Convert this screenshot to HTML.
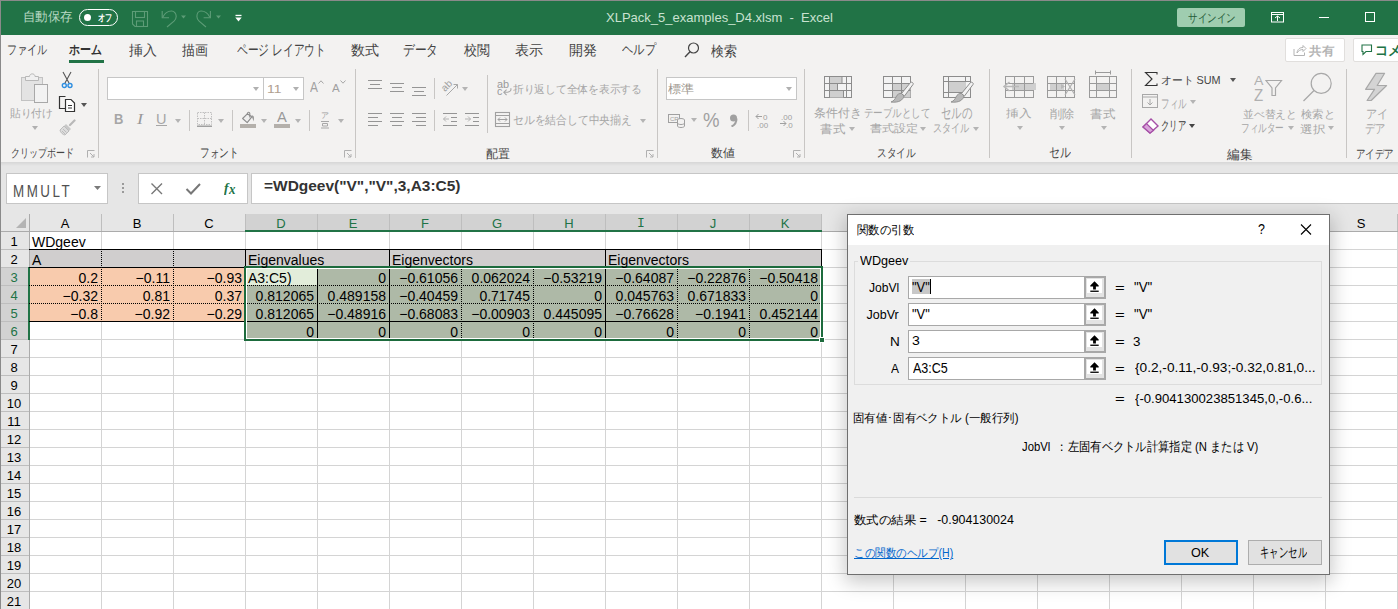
<!DOCTYPE html><html><head><meta charset="utf-8"><style>*{margin:0;padding:0;box-sizing:border-box}
html,body{width:1398px;height:609px;overflow:hidden;background:#fff;font-family:'Liberation Sans',sans-serif}
body{position:relative}
.a{position:absolute;white-space:nowrap;line-height:1}
.t{position:absolute;white-space:nowrap;line-height:1;transform-origin:0 0}
</style></head><body>
<div class="a" style="left:0px;top:0px;width:1398px;height:609px;background:#f3f2f1"></div>
<div class="a" style="left:0px;top:0px;width:1398px;height:35px;background:#217346"></div>
<div class="t" style="left:23.00px;top:10.00px;font-size:13.00px;color:#b7d8c2;font-weight:normal;transform:scaleX(0.959);">自動保存</div>
<div class="a" style="left:79px;top:9px;width:39px;height:17px;border:1.5px solid #fff;border-radius:9px"></div>
<div class="a" style="left:83.5px;top:13.5px;width:7px;height:7px;background:#fff;border-radius:50%"></div>
<div class="t" style="left:98.00px;top:13.00px;font-size:9.50px;color:#fff;font-weight:bold;transform:scaleX(0.722);">オフ</div>
<svg class="a" style="left:131px;top:10px" width="18" height="18" viewBox="0 0 18 18"><path d="M1.5 1.5 H16.5 V16.5 H4 L1.5 14 Z" fill="none" stroke="#5d9c77" stroke-width="1.1"/><rect x="4.5" y="1.5" width="9" height="6" fill="none" stroke="#5d9c77" stroke-width="1.1"/><rect x="5.5" y="11" width="7" height="5.5" fill="none" stroke="#5d9c77" stroke-width="1.1"/></svg>
<svg class="a" style="left:160px;top:9px" width="26" height="20" viewBox="0 0 26 20"><path d="M2.2 2 V8.8 H9" fill="none" stroke="#5d9c77" stroke-width="1.1"/><path d="M2.8 8.2 C5 3.5 8 2 11.5 2 C14.2 2 16.2 4.5 16.2 7.5 C16.2 9.5 15.2 11 14 12.2 L7 18" fill="none" stroke="#5d9c77" stroke-width="1.1"/><path d="M21 6.5 H26 L23.5 9.5 Z" fill="#5d9c77"/></svg>
<svg class="a" style="left:196px;top:9px" width="26" height="20" viewBox="0 0 26 20"><path d="M14.4 2 V8.8 H7.6" fill="none" stroke="#5d9c77" stroke-width="1.1"/><path d="M13.8 8.2 C11.6 3.5 8.6 2 5.1 2 C2.4 2 0.9 4.5 0.9 7.5 C0.9 9.5 1.9 11 3.1 12.2 L10 18" fill="none" stroke="#5d9c77" stroke-width="1.1"/><path d="M20 6.5 H25 L22.5 9.5 Z" fill="#5d9c77"/></svg>
<svg class="a" style="left:235px;top:14px" width="8" height="9" viewBox="0 0 8 9"><rect x="0.5" y="0.8" width="6" height="1.3" fill="#fff"/><path d="M0.3 3.5 H6.7 L3.5 7.5 Z" fill="#fff"/></svg>
<div class="t" style="left:606.00px;top:11.00px;font-size:13.00px;color:#c9e2d1;font-weight:normal;transform:scaleX(1.000);">XLPack_5_examples_D4.xlsm&nbsp;&nbsp;-&nbsp;&nbsp;Excel</div>
<div class="a" style="left:1177px;top:8px;width:68px;height:19px;background:#9fcdb0;border-radius:2px"></div>
<div class="t" style="left:1188.00px;top:13.00px;font-size:11.50px;color:#1f5c38;font-weight:normal;transform:scaleX(0.793);">サインイン</div>
<svg class="a" style="left:1270px;top:11px" width="15" height="12" viewBox="0 0 15 12"><rect x="1.5" y="1.5" width="12" height="9.5" fill="none" stroke="#fff" stroke-width="1"/><line x1="1.5" y1="3.5" x2="13.5" y2="3.5" stroke="#fff"/><path d="M5 7 L7.5 5 L10 7 M7.5 5 V10" stroke="#fff" fill="none"/></svg>
<div class="a" style="left:1319px;top:17px;width:10px;height:1px;background:#fff"></div>
<div class="a" style="left:1365px;top:12px;width:10px;height:10px;border:1px solid #fff"></div>
<div class="t" style="left:7.00px;top:44.00px;font-size:12.50px;color:#444;font-weight:normal;transform:scaleX(0.776);">ファイル</div>
<div class="t" style="left:69.00px;top:43.00px;font-size:13.00px;color:#333;font-weight:bold;transform:scaleX(0.842);">ホーム</div>
<div class="t" style="left:129.00px;top:44.00px;font-size:13.50px;color:#444;font-weight:normal;transform:scaleX(1.001);">挿入</div>
<div class="t" style="left:182.00px;top:44.00px;font-size:13.50px;color:#444;font-weight:normal;transform:scaleX(0.926);">描画</div>
<div class="t" style="left:237.00px;top:42.00px;font-size:15.00px;color:#444;font-weight:normal;transform:scaleX(0.714);">ページ レイアウト</div>
<div class="t" style="left:351.00px;top:44.00px;font-size:13.50px;color:#444;font-weight:normal;transform:scaleX(1.001);">数式</div>
<div class="t" style="left:403.00px;top:43.00px;font-size:14.50px;color:#444;font-weight:normal;transform:scaleX(0.780);">データ</div>
<div class="t" style="left:464.00px;top:44.00px;font-size:13.50px;color:#444;font-weight:normal;transform:scaleX(0.926);">校閲</div>
<div class="t" style="left:515.00px;top:44.00px;font-size:13.50px;color:#444;font-weight:normal;transform:scaleX(1.001);">表示</div>
<div class="t" style="left:569.00px;top:43.00px;font-size:14.00px;color:#444;font-weight:normal;transform:scaleX(1.000);">開発</div>
<div class="t" style="left:622.00px;top:43.00px;font-size:13.50px;color:#444;font-weight:normal;transform:scaleX(0.810);">ヘルプ</div>
<div class="t" style="left:711.00px;top:45.00px;font-size:13.50px;color:#444;font-weight:normal;transform:scaleX(0.926);">検索</div>
<div class="a" style="left:69px;top:60px;width:35px;height:3px;background:#217346"></div>
<svg class="a" style="left:684px;top:42px" width="15" height="16" viewBox="0 0 15 16"><circle cx="9.5" cy="6" r="5" fill="none" stroke="#444" stroke-width="1.2"/><line x1="6" y1="9.8" x2="1" y2="15" stroke="#444" stroke-width="1.4"/></svg>
<div class="a" style="left:1285px;top:38px;width:60px;height:24px;background:#fff;border:1px solid #e1dfdd;border-radius:2px"></div>
<svg class="a" style="left:1292px;top:43px" width="15" height="14" viewBox="0 0 15 14"><path d="M2 6 V12.5 H12.5 V9.5" fill="none" stroke="#b4b4b4"/><path d="M5 10 C5.5 6 8 4.5 11 4.5 V2.5 L14 5.5 L11 8.5 V6.5 C8.5 6.5 6.5 7.5 5 10Z" fill="none" stroke="#b4b4b4"/></svg>
<div class="t" style="left:1309.00px;top:45.00px;font-size:12.00px;color:#b4b4b4;font-weight:bold;transform:scaleX(1.042);">共有</div>
<div class="a" style="left:1353px;top:38px;width:60px;height:24px;background:#fff;border:1px solid #e1dfdd;border-radius:2px"></div>
<svg class="a" style="left:1361px;top:44px" width="14" height="14" viewBox="0 0 14 14"><path d="M1 1 H10.5 V7.5 H5 L2 10.5 V7.5 H1 Z" fill="none" stroke="#217346" stroke-width="1.1"/></svg>
<div class="t" style="left:1375.00px;top:44.00px;font-size:13.50px;color:#217346;font-weight:bold;transform:scaleX(0.941);">コメント</div>
<svg class="a" style="left:19px;top:72px" width="31" height="33" viewBox="0 0 31 33"><rect x="2.5" y="5.5" width="21" height="23" fill="#e3e3e3" stroke="#c2c2c2"/><path d="M6.5 8.5 V4.5 H10.5 C10.5 1 16 1 16 4.5 H19.5 V8.5 Z" fill="#f0f0f0" stroke="#b8b8b8"/><rect x="15.5" y="12.5" width="13" height="18" fill="#f2f2f2" stroke="#a8a8a8"/></svg>
<div class="t" style="left:10.00px;top:108.00px;font-size:11.00px;color:#a6a6a6;font-weight:normal;transform:scaleX(0.976);">貼り付け</div>
<svg class="a" style="left:31.5px;top:126px" width="6" height="4"><path d="M0 0 L6 0 L3.0 4 Z" fill="#b0b0b0"/></svg>
<svg class="a" style="left:61px;top:71px" width="12" height="18" viewBox="0 0 12 18"><path d="M2 1 L8 12 M10 1 L4 12" stroke="#555" stroke-width="1.1" fill="none"/><circle cx="3.3" cy="14.5" r="2" fill="none" stroke="#2e8ee0" stroke-width="1.4"/><circle cx="9" cy="14.5" r="2" fill="none" stroke="#2e8ee0" stroke-width="1.4"/></svg>
<svg class="a" style="left:58px;top:95px" width="18" height="18" viewBox="0 0 18 18"><path d="M7.5 1.5 H1.5 V13.5 H7.5" fill="none" stroke="#333" stroke-width="1.2"/><path d="M7.5 4.5 H13 L16.5 8 V16.5 H7.5 Z" fill="#fff" stroke="#333" stroke-width="1.2"/><path d="M10 10.5 H14 M10 13 H14" stroke="#333"/></svg>
<svg class="a" style="left:80.7px;top:103px" width="6" height="4"><path d="M0 0 L6 0 L3.0 4 Z" fill="#555"/></svg>
<svg class="a" style="left:59px;top:119px" width="17" height="17" viewBox="0 0 17 17"><path d="M11 6 L15.5 1.5" stroke="#b8b8b8" stroke-width="2.2" stroke-linecap="round"/><path d="M7 5 L12 10 L10 12 L5 7 Z" fill="#c8c8c8"/><path d="M5 7 L10 12 L6 16 C4 16 1 13 1 11 Z" fill="#dcdcdc" stroke="#bcbcbc"/><path d="M3 12 L6 15 M4 10 L7.5 13.5" stroke="#bcbcbc"/></svg>
<div class="t" style="left:11.00px;top:148.00px;font-size:11.50px;color:#444;font-weight:normal;transform:scaleX(0.750);">クリップボード</div>
<svg class="a" style="left:87px;top:150px" width="8" height="8" viewBox="0 0 8 8"><path d="M0.5 7.5 V0.5 H7.5" fill="none" stroke="#b0b0b0"/><path d="M3 3 L7 7 M7 4 V7 H4" fill="none" stroke="#b0b0b0"/></svg>
<div class="a" style="left:98px;top:69px;width:1px;height:89px;background:#c8c6c4"></div>
<div class="a" style="left:107px;top:77px;width:157px;height:23px;background:#fff;border:1px solid #c6c6c6"></div>
<svg class="a" style="left:253.0px;top:87px" width="6" height="4"><path d="M0 0 L6 0 L3.0 4 Z" fill="#b0b0b0"/></svg>
<div class="a" style="left:263px;top:77px;width:41px;height:23px;background:#fff;border:1px solid #c6c6c6"></div>
<div class="t" style="left:266.50px;top:84.00px;font-size:11.50px;color:#b0a090;font-weight:normal;transform:scaleX(1.207);">11</div>
<svg class="a" style="left:293.3px;top:87px" width="6" height="4"><path d="M0 0 L6 0 L3.0 4 Z" fill="#b0b0b0"/></svg>
<div class="t" style="left:310.20px;top:80.20px;font-size:14.00px;color:#a0a0a0;font-weight:normal;transform:scaleX(0.850);">A</div>
<svg class="a" style="left:318px;top:80px" width="6" height="4" viewBox="0 0 6 4"><path d="M0.5 3.5 L3 0.8 L5.5 3.5" fill="none" stroke="#a6a6a6"/></svg>
<div class="t" style="left:332.00px;top:82.50px;font-size:11.50px;color:#a0a0a0;font-weight:normal;transform:scaleX(1.004);">A</div>
<svg class="a" style="left:340px;top:80px" width="6" height="4" viewBox="0 0 6 4"><path d="M0.5 0.5 L3 3.2 L5.5 0.5" fill="none" stroke="#a6a6a6"/></svg>
<div class="t" style="left:114.00px;top:112.00px;font-size:14.50px;color:#a6a6a6;font-weight:bold;transform:scaleX(0.893);">B</div>
<div class="t" style="left:137.00px;top:112.00px;font-size:15.00px;color:#999;font-weight:normal;transform:scaleX(1.207);font-style:italic;font-family:'Liberation Serif',serif">I</div>
<div class="t" style="left:156.00px;top:112.00px;font-size:14.50px;color:#a6a6a6;font-weight:normal;transform:scaleX(1.000);">U</div>
<div class="a" style="left:156px;top:125px;width:11px;height:1px;background:#a6a6a6"></div>
<svg class="a" style="left:175.3px;top:119px" width="6" height="4"><path d="M0 0 L6 0 L3.0 4 Z" fill="#b4b4b4"/></svg>
<div class="a" style="left:189px;top:110px;width:1px;height:21px;background:#c8c6c4"></div>
<svg class="a" style="left:196px;top:111px" width="17" height="17" viewBox="0 0 17 17"><rect x="1.5" y="1.5" width="14" height="12" fill="none" stroke="#c0c0c0" stroke-dasharray="1.5 1"/><path d="M8.5 1.5 V13.5 M1.5 7.5 H15.5" stroke="#c0c0c0" stroke-dasharray="1.5 1"/><rect x="1" y="14.5" width="15" height="1.5" fill="#a0a0a0"/></svg>
<svg class="a" style="left:218.2px;top:119px" width="6" height="4"><path d="M0 0 L6 0 L3.0 4 Z" fill="#b4b4b4"/></svg>
<div class="a" style="left:232px;top:110px;width:1px;height:21px;background:#c8c6c4"></div>
<svg class="a" style="left:238px;top:110px" width="20" height="20" viewBox="0 0 20 20"><polygon points="4.6,8.5 9.3,3.8 13.8,6.8 9.2,12.6" fill="#eeeeee" stroke="#8c8c8c" stroke-width="1.1" stroke-linejoin="round"/><path d="M9.3 4 C9.3 2 11.8 1.6 11.8 3.6 V7.6" fill="none" stroke="#8c8c8c" stroke-width="1.1"/><path d="M13.2 6 C15 4.5 17 6.5 15.5 11.5 C15 9.5 14.5 8 13.8 7Z" fill="#9a9a9a"/><rect x="2" y="14" width="16" height="4" fill="#b4b0ab"/></svg>
<svg class="a" style="left:261.2px;top:119px" width="6" height="4"><path d="M0 0 L6 0 L3.0 4 Z" fill="#b4b4b4"/></svg>
<div class="t" style="left:277.40px;top:109.20px;font-size:15.00px;color:#999;font-weight:normal;transform:scaleX(0.982);">A</div>
<div class="a" style="left:274px;top:124px;width:16px;height:4px;background:#b4b0ab"></div>
<svg class="a" style="left:295.1px;top:119px" width="6" height="4"><path d="M0 0 L6 0 L3.0 4 Z" fill="#b4b4b4"/></svg>
<div class="a" style="left:309px;top:110px;width:1px;height:21px;background:#c8c6c4"></div>
<div class="t" style="left:321.00px;top:112.00px;font-size:8.00px;color:#a0a0a0;font-weight:normal;transform:scaleX(1.006);">ア</div>
<svg class="a" style="left:320px;top:120px" width="11" height="9" viewBox="0 0 11 9"><path d="M1 1.5 H9 M2.5 3.5 H7.5 V6 H2.5 Z M1 8 H9" fill="none" stroke="#a8a8a8"/></svg>
<svg class="a" style="left:338.4px;top:119px" width="6" height="4"><path d="M0 0 L6 0 L3.0 4 Z" fill="#b4b4b4"/></svg>
<div class="t" style="left:200.00px;top:146.00px;font-size:13.00px;color:#444;font-weight:normal;transform:scaleX(0.745);">フォント</div>
<svg class="a" style="left:344px;top:150px" width="8" height="8" viewBox="0 0 8 8"><path d="M0.5 7.5 V0.5 H7.5" fill="none" stroke="#b0b0b0"/><path d="M3 3 L7 7 M7 4 V7 H4" fill="none" stroke="#b0b0b0"/></svg>
<div class="a" style="left:355px;top:69px;width:1px;height:89px;background:#c8c6c4"></div>
<div class="a" style="left:368px;top:80px;width:14px;height:1px;background:#959595"></div>
<div class="a" style="left:370px;top:84px;width:10px;height:1px;background:#959595"></div>
<div class="a" style="left:368px;top:88px;width:14px;height:1px;background:#959595"></div>
<div class="a" style="left:390px;top:83px;width:14px;height:1px;background:#959595"></div>
<div class="a" style="left:392px;top:87px;width:10px;height:1px;background:#959595"></div>
<div class="a" style="left:390px;top:91px;width:14px;height:1px;background:#959595"></div>
<div class="a" style="left:412px;top:87px;width:14px;height:1px;background:#959595"></div>
<div class="a" style="left:414px;top:91px;width:10px;height:1px;background:#959595"></div>
<div class="a" style="left:412px;top:95px;width:14px;height:1px;background:#959595"></div>
<div class="a" style="left:434px;top:78px;width:1px;height:21px;background:#c8c6c4"></div>
<svg class="a" style="left:440px;top:78px" width="22" height="20" viewBox="0 0 22 20"><text x="0" y="0" font-size="10" fill="#a0a0a0" font-family="Liberation Sans" transform="translate(5 14) rotate(-45)">ab</text><path d="M6.5 17.5 L17.5 6.5 M13.5 6.5 H17.5 V10.5" fill="none" stroke="#a8a8a8" stroke-width="1"/></svg>
<svg class="a" style="left:461.5px;top:87px" width="6" height="4"><path d="M0 0 L6 0 L3.0 4 Z" fill="#b4b4b4"/></svg>
<div class="a" style="left:487px;top:75px;width:1px;height:58px;background:#c8c6c4"></div>
<div class="t" style="left:497.30px;top:80.10px;font-size:10.00px;color:#999;font-weight:normal;transform:scaleX(1.091);">ab</div>
<div class="t" style="left:497.30px;top:86.00px;font-size:10.50px;color:#999;font-weight:normal;transform:scaleX(1.012);">c</div>
<svg class="a" style="left:502px;top:87px" width="11" height="10" viewBox="0 0 11 10"><path d="M8.7 1.2 C9.8 4.2 7.5 5.3 2 5.3 M4.6 2.6 L1.8 5.3 L4.6 8.2" fill="none" stroke="#a8a8a8" stroke-width="1.1"/></svg>
<div class="t" style="left:513.00px;top:84.00px;font-size:11.00px;color:#a6a6a6;font-weight:normal;transform:scaleX(0.977);">折り返して全体を表示する</div>
<div class="a" style="left:368px;top:113px;width:14px;height:1px;background:#959595"></div>
<div class="a" style="left:368px;top:117px;width:10px;height:1px;background:#959595"></div>
<div class="a" style="left:368px;top:121px;width:14px;height:1px;background:#959595"></div>
<div class="a" style="left:368px;top:125px;width:10px;height:1px;background:#959595"></div>
<div class="a" style="left:390px;top:113px;width:14px;height:1px;background:#959595"></div>
<div class="a" style="left:392px;top:117px;width:10px;height:1px;background:#959595"></div>
<div class="a" style="left:390px;top:121px;width:14px;height:1px;background:#959595"></div>
<div class="a" style="left:392px;top:125px;width:10px;height:1px;background:#959595"></div>
<div class="a" style="left:412px;top:113px;width:14px;height:1px;background:#959595"></div>
<div class="a" style="left:416px;top:117px;width:10px;height:1px;background:#959595"></div>
<div class="a" style="left:412px;top:121px;width:14px;height:1px;background:#959595"></div>
<div class="a" style="left:416px;top:125px;width:10px;height:1px;background:#959595"></div>
<div class="a" style="left:434px;top:110px;width:1px;height:21px;background:#c8c6c4"></div>
<div class="a" style="left:443px;top:113px;width:14px;height:1px;background:#959595"></div>
<div class="a" style="left:451px;top:117px;width:6px;height:1px;background:#959595"></div>
<div class="a" style="left:451px;top:121px;width:6px;height:1px;background:#959595"></div>
<div class="a" style="left:443px;top:125px;width:14px;height:1px;background:#959595"></div>
<svg class="a" style="left:442px;top:115px" width="8" height="8" viewBox="0 0 8 8"><path d="M7 4 H1.5 M4 1.5 L1.5 4 L4 6.5" fill="none" stroke="#b4b4b4"/></svg>
<div class="a" style="left:465px;top:113px;width:14px;height:1px;background:#959595"></div>
<div class="a" style="left:473px;top:117px;width:6px;height:1px;background:#959595"></div>
<div class="a" style="left:473px;top:121px;width:6px;height:1px;background:#959595"></div>
<div class="a" style="left:465px;top:125px;width:14px;height:1px;background:#959595"></div>
<svg class="a" style="left:465px;top:115px" width="8" height="8" viewBox="0 0 8 8"><path d="M0 4 H5.5 M3 1.5 L5.5 4 L3 6.5" fill="none" stroke="#b4b4b4"/></svg>
<svg class="a" style="left:494px;top:111px" width="17" height="17" viewBox="0 0 17 17"><rect x="1.5" y="1.5" width="14" height="14" fill="none" stroke="#a0a0a0" stroke-width="1.1"/><path d="M1.5 4.5 H15.5 M1.5 12.5 H15.5" stroke="#a0a0a0"/><path d="M4 8.5 H13 M6 6.5 L4 8.5 L6 10.5 M11 6.5 L13 8.5 L11 10.5" fill="none" stroke="#a0a0a0"/></svg>
<div class="t" style="left:513.00px;top:114.00px;font-size:12.00px;color:#a6a6a6;font-weight:normal;transform:scaleX(0.900);">セルを結合して中央揃え</div>
<svg class="a" style="left:639.8px;top:119px" width="6" height="4"><path d="M0 0 L6 0 L3.0 4 Z" fill="#b4b4b4"/></svg>
<div class="t" style="left:486.00px;top:149.00px;font-size:11.50px;color:#444;font-weight:normal;transform:scaleX(1.002);">配置</div>
<svg class="a" style="left:646px;top:150px" width="8" height="8" viewBox="0 0 8 8"><path d="M0.5 7.5 V0.5 H7.5" fill="none" stroke="#b0b0b0"/><path d="M3 3 L7 7 M7 4 V7 H4" fill="none" stroke="#b0b0b0"/></svg>
<div class="a" style="left:657px;top:69px;width:1px;height:89px;background:#c8c6c4"></div>
<div class="a" style="left:666px;top:77px;width:131px;height:23px;background:#fff;border:1px solid #c6c6c6"></div>
<div class="t" style="left:668.00px;top:84.00px;font-size:11.50px;color:#a09890;font-weight:normal;transform:scaleX(1.091);">標準</div>
<svg class="a" style="left:786.4px;top:87px" width="6" height="4"><path d="M0 0 L6 0 L3.0 4 Z" fill="#b0b0b0"/></svg>
<svg class="a" style="left:668px;top:113px" width="18" height="16" viewBox="0 0 18 16"><rect x="0.5" y="1.5" width="11" height="8" fill="none" stroke="#a0a0a0"/><text x="2" y="8" font-size="6" fill="#a0a0a0" font-family="Liberation Sans">CR</text><ellipse cx="13" cy="7" rx="3.5" ry="1.5" fill="#f3f2f1" stroke="#a0a0a0"/><path d="M9.5 7 V13 C9.5 15 16.5 15 16.5 13 V7" fill="#f3f2f1" stroke="#a0a0a0"/><path d="M9.5 10 C9.5 12 16.5 12 16.5 10" fill="none" stroke="#a0a0a0"/></svg>
<svg class="a" style="left:690.8px;top:118px" width="6" height="4"><path d="M0 0 L6 0 L3.0 4 Z" fill="#b4b4b4"/></svg>
<div class="t" style="left:702.70px;top:111.00px;font-size:19.50px;color:#a0a0a0;font-weight:normal;transform:scaleX(0.952);">%</div>
<svg class="a" style="left:729px;top:114px" width="9" height="13" viewBox="0 0 9 13"><circle cx="4.5" cy="4" r="3.5" fill="#a0a0a0"/><path d="M7.5 4.5 C7.5 8 6 11 2.5 12.5" stroke="#a0a0a0" stroke-width="2" fill="none"/></svg>
<div class="a" style="left:748px;top:110px;width:1px;height:21px;background:#c8c6c4"></div>
<svg class="a" style="left:755px;top:112px" width="17" height="16" viewBox="0 0 17 16"><path d="M1 4.5 H7 M3.5 2 L1 4.5 L3.5 7" fill="none" stroke="#a0a0a0"/><text x="8" y="8" font-size="8" fill="#a0a0a0" font-family="Liberation Sans">0</text><text x="2" y="15.5" font-size="8" fill="#a0a0a0" font-family="Liberation Sans">.00</text></svg>
<svg class="a" style="left:779px;top:112px" width="17" height="16" viewBox="0 0 17 16"><text x="2" y="7.5" font-size="8" fill="#a0a0a0" font-family="Liberation Sans">.00</text><path d="M1 11.5 H7 M4.5 9 L7 11.5 L4.5 14" fill="none" stroke="#a0a0a0"/><text x="7" y="15.5" font-size="8" fill="#a0a0a0" font-family="Liberation Sans">.0</text></svg>
<div class="t" style="left:711.00px;top:148.00px;font-size:11.50px;color:#444;font-weight:normal;transform:scaleX(1.002);">数値</div>
<svg class="a" style="left:793px;top:150px" width="8" height="8" viewBox="0 0 8 8"><path d="M0.5 7.5 V0.5 H7.5" fill="none" stroke="#b0b0b0"/><path d="M3 3 L7 7 M7 4 V7 H4" fill="none" stroke="#b0b0b0"/></svg>
<div class="a" style="left:804px;top:69px;width:1px;height:89px;background:#c8c6c4"></div>
<svg class="a" style="left:824px;top:76px" width="29" height="23" viewBox="0 0 29 23"><rect x="0.5" y="0.5" width="27" height="21" fill="#f3f3f3" stroke="#8c8c8c"/><rect x="6" y="1" width="12" height="6.5" fill="#cfcfcf"/><rect x="6" y="8" width="7.5" height="6.5" fill="#cfcfcf"/><rect x="6" y="15" width="13.5" height="6.5" fill="#cfcfcf"/><path d="M5.5 0.5 V21.5 M22.5 0.5 V21.5 M0.5 7.5 H27.5 M0.5 14.5 H27.5 M18 0.5 V7.5 M13.5 7.5 V14.5 M19.5 14.5 V21.5" stroke="#8c8c8c"/></svg>
<svg class="a" style="left:883px;top:76px" width="32" height="28" viewBox="0 0 32 28"><rect x="0.5" y="0.5" width="27" height="21" fill="#f3f3f3" stroke="#8c8c8c"/><rect x="10" y="8" width="17.5" height="13.5" fill="#cfcfcf"/><path d="M9.5 0.5 V21.5 M18.5 0.5 V21.5 M0.5 7.5 H27.5 M0.5 14.5 H27.5" stroke="#8c8c8c"/><path d="M27.5 6.5 C28.5 5.5 31 7 30 8.5 L21.5 20 L18.5 17.5 Z" fill="#f3f3f3" stroke="#8c8c8c"/><path d="M18.5 17.5 L21 20 C20 24 16 27 8 26 C11 25 12 23 13 21 C14 18.5 16.5 17 18.5 17.5 Z" fill="#b8b8b8" stroke="#8c8c8c" stroke-width="0.9"/></svg>
<svg class="a" style="left:943px;top:76px" width="32" height="28" viewBox="0 0 32 28"><rect x="0.5" y="0.5" width="27" height="21" fill="#f3f3f3" stroke="#8c8c8c"/><rect x="5" y="5" width="18" height="12" fill="#cfcfcf"/><path d="M5.5 0.5 V21.5 M22.5 0.5 V5 M0.5 5.5 H27.5 M0.5 16.5 H22" stroke="#8c8c8c"/><path d="M27.5 6.5 C28.5 5.5 31 7 30 8.5 L21.5 20 L18.5 17.5 Z" fill="#f3f3f3" stroke="#8c8c8c"/><path d="M18.5 17.5 L21 20 C20 24 16 27 8 26 C11 25 12 23 13 21 C14 18.5 16.5 17 18.5 17.5 Z" fill="#b8b8b8" stroke="#8c8c8c" stroke-width="0.9"/></svg>
<div class="t" style="left:814.00px;top:108.00px;font-size:11.50px;color:#a6a6a6;font-weight:normal;transform:scaleX(1.000);">条件付き</div>
<div class="t" style="left:820.00px;top:124.00px;font-size:11.50px;color:#a6a6a6;font-weight:normal;transform:scaleX(1.043);">書式</div>
<svg class="a" style="left:848.7px;top:127px" width="6" height="4"><path d="M0 0 L6 0 L3.0 4 Z" fill="#b4b4b4"/></svg>
<div class="t" style="left:864.00px;top:107.00px;font-size:12.00px;color:#a6a6a6;font-weight:normal;transform:scaleX(0.790);">テーブルとして</div>
<div class="t" style="left:869.60px;top:123.00px;font-size:11.00px;color:#a6a6a6;font-weight:normal;transform:scaleX(1.102);">書式設定</div>
<svg class="a" style="left:920.2px;top:127px" width="6" height="4"><path d="M0 0 L6 0 L3.0 4 Z" fill="#b4b4b4"/></svg>
<div class="t" style="left:941.00px;top:106.00px;font-size:14.50px;color:#a6a6a6;font-weight:normal;transform:scaleX(0.698);">セルの</div>
<div class="t" style="left:932.80px;top:122.00px;font-size:12.00px;color:#a6a6a6;font-weight:normal;transform:scaleX(0.762);">スタイル</div>
<svg class="a" style="left:973.3px;top:127px" width="6" height="4"><path d="M0 0 L6 0 L3.0 4 Z" fill="#b4b4b4"/></svg>
<div class="t" style="left:877.00px;top:147.00px;font-size:12.00px;color:#444;font-weight:normal;transform:scaleX(0.809);">スタイル</div>
<div class="a" style="left:989px;top:69px;width:1px;height:89px;background:#c8c6c4"></div>
<svg class="a" style="left:1002px;top:76px" width="34" height="22" viewBox="0 0 34 22"><rect x="3.5" y="0.5" width="28" height="21" fill="#f3f2f1" stroke="#9a9a9a"/><rect x="10" y="7" width="25" height="7" fill="#cfcfcf"/><path d="M12.5 0.5 V21.5 M22.5 0.5 V21.5 M3.5 7.5 H31.5 M3.5 14.5 H31.5" stroke="#9a9a9a"/><path d="M17 10.5 H3 M7.5 6 L2 10.5 L7.5 15" fill="none" stroke="#b8b8b8" stroke-width="1.5"/></svg>
<svg class="a" style="left:1046px;top:76px" width="31" height="22" viewBox="0 0 31 22"><rect x="1.5" y="0.5" width="27" height="21" fill="#f3f2f1" stroke="#9a9a9a"/><rect x="4" y="7" width="14" height="7" fill="#cfcfcf"/><path d="M10.5 0.5 V21.5 M19.5 0.5 V21.5 M1.5 7.5 H28.5 M1.5 14.5 H28.5" stroke="#9a9a9a"/><path d="M19 3 L29 19 M29 3 L19 19" stroke="#b0b0b0" stroke-width="1.2"/><path d="M15 8 L19 10.5 L15 13Z" fill="#b8b8b8"/></svg>
<svg class="a" style="left:1088px;top:70px" width="30" height="28" viewBox="0 0 30 28"><path d="M7.5 2.5 H22.5 M7.5 0.5 V4.5 M22.5 0.5 V4.5" stroke="#9a9a9a"/><rect x="1.5" y="6.5" width="27" height="21" fill="#f3f2f1" stroke="#9a9a9a"/><rect x="9" y="13" width="13" height="7" fill="#cfcfcf"/><path d="M8.5 6.5 V27.5 M21.5 6.5 V27.5 M1.5 13.5 H28.5 M1.5 20.5 H28.5" stroke="#9a9a9a"/></svg>
<div class="t" style="left:1006.00px;top:108.00px;font-size:11.00px;color:#a6a6a6;font-weight:normal;transform:scaleX(1.151);">挿入</div>
<svg class="a" style="left:1017.4px;top:126px" width="6" height="4"><path d="M0 0 L6 0 L3.0 4 Z" fill="#b4b4b4"/></svg>
<div class="t" style="left:1049.50px;top:109.00px;font-size:11.50px;color:#a6a6a6;font-weight:normal;transform:scaleX(1.017);">削除</div>
<svg class="a" style="left:1059.4px;top:126px" width="6" height="4"><path d="M0 0 L6 0 L3.0 4 Z" fill="#b4b4b4"/></svg>
<div class="t" style="left:1090.00px;top:109.00px;font-size:11.50px;color:#a6a6a6;font-weight:normal;transform:scaleX(1.043);">書式</div>
<svg class="a" style="left:1101.2px;top:126px" width="6" height="4"><path d="M0 0 L6 0 L3.0 4 Z" fill="#b4b4b4"/></svg>
<div class="t" style="left:1049.00px;top:145.00px;font-size:14.00px;color:#444;font-weight:normal;transform:scaleX(0.780);">セル</div>
<div class="a" style="left:1131px;top:69px;width:1px;height:89px;background:#c8c6c4"></div>
<svg class="a" style="left:1144px;top:71px" width="15" height="16" viewBox="0 0 15 16"><path d="M13 3.5 V1.5 H1.5 L8 8 L1.5 14.5 H13 V12.5" fill="none" stroke="#333" stroke-width="1.1"/></svg>
<div class="t" style="left:1161.00px;top:74.80px;font-size:11.00px;color:#444;font-weight:normal;transform:scaleX(0.983);">オート SUM</div>
<svg class="a" style="left:1229.5px;top:78px" width="6" height="4"><path d="M0 0 L6 0 L3.0 4 Z" fill="#555"/></svg>
<svg class="a" style="left:1142px;top:94px" width="17" height="15" viewBox="0 0 17 15"><rect x="0.5" y="0.5" width="15" height="13" fill="none" stroke="#a8a8a8"/><path d="M0.5 3 H15.5" stroke="#a8a8a8"/><path d="M8 5 V11 M5.5 8.5 L8 11 L10.5 8.5" fill="none" stroke="#a8a8a8"/></svg>
<div class="t" style="left:1161.00px;top:97.60px;font-size:12.50px;color:#a6a6a6;font-weight:normal;transform:scaleX(0.656);">フィル</div>
<svg class="a" style="left:1190.2px;top:100px" width="6" height="4"><path d="M0 0 L6 0 L3.0 4 Z" fill="#b4b4b4"/></svg>
<svg class="a" style="left:1142px;top:117px" width="17" height="17" viewBox="0 0 17 17"><path d="M1 10 L9 2 L16 9 L8 16 Z" fill="#fff" stroke="#a54fa6" stroke-width="1.4"/><path d="M1 10 L4.5 6.5 L11.5 13.5 L8 16 Z" fill="#d9a3da" stroke="#a54fa6" stroke-width="1.2"/></svg>
<div class="t" style="left:1161.00px;top:120.00px;font-size:12.50px;color:#333;font-weight:normal;transform:scaleX(0.645);">クリア</div>
<svg class="a" style="left:1189.2px;top:124px" width="6" height="4"><path d="M0 0 L6 0 L3.0 4 Z" fill="#444"/></svg>
<div class="t" style="left:1254.30px;top:73.80px;font-size:13.50px;color:#b0b0b0;font-weight:normal;transform:scaleX(1.045);">A</div>
<div class="t" style="left:1254.30px;top:87.70px;font-size:16.00px;color:#b0b0b0;font-weight:normal;transform:scaleX(0.940);">Z</div>
<svg class="a" style="left:1265px;top:79px" width="18" height="18" viewBox="0 0 18 18"><path d="M1 1.5 H16.5 L10.5 9 V16.5 H7 V9 Z" fill="none" stroke="#a8a8a8" stroke-width="1.2"/></svg>
<div class="t" style="left:1242.70px;top:108.60px;font-size:11.00px;color:#a6a6a6;font-weight:normal;transform:scaleX(0.980);">並べ替えと</div>
<div class="t" style="left:1241.20px;top:122.70px;font-size:11.50px;color:#a6a6a6;font-weight:normal;transform:scaleX(0.714);">フィルター</div>
<svg class="a" style="left:1288.0px;top:126px" width="6" height="4"><path d="M0 0 L6 0 L3.0 4 Z" fill="#b4b4b4"/></svg>
<svg class="a" style="left:1302px;top:72px" width="31" height="31" viewBox="0 0 31 31"><circle cx="19.2" cy="11.4" r="10" fill="none" stroke="#a8a8a8" stroke-width="1.2"/><line x1="12" y1="18.5" x2="1.5" y2="29" stroke="#a8a8a8" stroke-width="1.3"/></svg>
<div class="t" style="left:1301.20px;top:108.60px;font-size:11.00px;color:#a6a6a6;font-weight:normal;transform:scaleX(1.030);">検索と</div>
<div class="t" style="left:1300.30px;top:123.70px;font-size:10.50px;color:#a6a6a6;font-weight:normal;transform:scaleX(1.141);">選択</div>
<svg class="a" style="left:1328.3px;top:126px" width="6" height="4"><path d="M0 0 L6 0 L3.0 4 Z" fill="#b4b4b4"/></svg>
<div class="t" style="left:1227.20px;top:148.50px;font-size:12.50px;color:#444;font-weight:normal;transform:scaleX(0.969);">編集</div>
<div class="a" style="left:1346px;top:69px;width:1px;height:89px;background:#c8c6c4"></div>
<svg class="a" style="left:1360px;top:68px" width="30" height="36" viewBox="0 0 30 36"><polygon points="16.0,5.3 24.6,5.3 17.2,17.5 26.6,17.5 11.2,32.5 7.1,32.5 14.5,21.3 5.6,21.3" fill="#d4d4d4" stroke="#a8a8a8" stroke-width="1.2" stroke-linejoin="round"/></svg>
<div class="t" style="left:1365.80px;top:107.60px;font-size:12.00px;color:#a6a6a6;font-weight:normal;transform:scaleX(0.928);">アイ</div>
<div class="t" style="left:1364.50px;top:122.70px;font-size:12.50px;color:#a6a6a6;font-weight:normal;transform:scaleX(0.792);">デア</div>
<div class="t" style="left:1356.20px;top:147.50px;font-size:12.00px;color:#444;font-weight:normal;transform:scaleX(0.791);">アイデア</div>
<div class="a" style="left:1px;top:162px;width:1397px;height:52px;background:#e6e6e6"></div>
<div class="a" style="left:1px;top:162px;width:1397px;height:4px;background:linear-gradient(#d6d6d6,#e6e6e6)"></div>
<div class="a" style="left:6px;top:173px;width:102px;height:31px;background:#fff;border:1px solid #c6c6c6"></div>
<div class="t" style="left:13.00px;top:184.00px;font-size:16.00px;color:#505050;font-weight:normal;transform:scaleX(0.836);letter-spacing:3px">MMULT</div>
<svg class="a" style="left:94px;top:186px" width="8" height="5" viewBox="0 0 8 5"><path d="M0 0 H7 L3.5 4 Z" fill="#7a7a7a"/></svg>
<div class="a" style="left:122px;top:183px;width:1.5px;height:1.5px;background:#9a9a9a"></div>
<div class="a" style="left:122px;top:187px;width:1.5px;height:1.5px;background:#9a9a9a"></div>
<div class="a" style="left:122px;top:191px;width:1.5px;height:1.5px;background:#9a9a9a"></div>
<div class="a" style="left:138px;top:173px;width:110px;height:31px;background:#fff;border:1px solid #c6c6c6"></div>
<svg class="a" style="left:150px;top:182px" width="14" height="13" viewBox="0 0 14 13"><path d="M1.5 1.5 L12 12 M12 1.5 L1.5 12" stroke="#777" stroke-width="1.4"/></svg>
<svg class="a" style="left:185px;top:182px" width="16" height="13" viewBox="0 0 16 13"><path d="M1.5 7 L6 11.5 L15 2" fill="none" stroke="#777" stroke-width="2"/></svg>
<div class="t" style="left:223.70px;top:182.00px;font-size:12.00px;color:#217346;font-weight:bold;transform:scaleX(1.124);font-family:'Liberation Serif',serif"><i>f</i></div>
<div class="t" style="left:229.00px;top:182.00px;font-size:15.00px;color:#217346;font-weight:bold;transform:scaleX(0.857);font-family:'Liberation Serif',serif"><i>x</i></div>
<div class="a" style="left:251px;top:173px;width:1147px;height:31px;background:#fff;border:1px solid #c6c6c6;border-right:none"></div>
<div class="t" style="left:264.00px;top:178.20px;font-size:15.00px;color:#333;font-weight:bold;transform:scaleX(1.031);">=WDgeev(&quot;V&quot;,&quot;V&quot;,3,A3:C5)</div>
<div class="a" style="left:1px;top:214px;width:1397px;height:17px;background:#e6e6e6"></div>
<div class="a" style="left:1px;top:231px;width:1397px;height:378px;background:#fff"></div>
<div class="a" style="left:245px;top:214px;width:576px;height:17px;background:#d2d2d2"></div>
<div class="a" style="left:1px;top:231px;width:28px;height:378px;background:#e6e6e6"></div>
<div class="a" style="left:1px;top:267px;width:28px;height:72px;background:#d2d2d2"></div>
<div class="a" style="left:29px;top:232px;width:1px;height:377px;background:#d4d4d4"></div><div class="a" style="left:29px;top:214px;width:1px;height:17px;background:#bebebe"></div><div class="a" style="left:101px;top:232px;width:1px;height:377px;background:#d4d4d4"></div><div class="a" style="left:101px;top:214px;width:1px;height:17px;background:#bebebe"></div><div class="a" style="left:173px;top:232px;width:1px;height:377px;background:#d4d4d4"></div><div class="a" style="left:173px;top:214px;width:1px;height:17px;background:#bebebe"></div><div class="a" style="left:245px;top:232px;width:1px;height:377px;background:#d4d4d4"></div><div class="a" style="left:245px;top:214px;width:1px;height:17px;background:#bebebe"></div><div class="a" style="left:317px;top:232px;width:1px;height:377px;background:#d4d4d4"></div><div class="a" style="left:317px;top:214px;width:1px;height:17px;background:#bebebe"></div><div class="a" style="left:389px;top:232px;width:1px;height:377px;background:#d4d4d4"></div><div class="a" style="left:389px;top:214px;width:1px;height:17px;background:#bebebe"></div><div class="a" style="left:461px;top:232px;width:1px;height:377px;background:#d4d4d4"></div><div class="a" style="left:461px;top:214px;width:1px;height:17px;background:#bebebe"></div><div class="a" style="left:533px;top:232px;width:1px;height:377px;background:#d4d4d4"></div><div class="a" style="left:533px;top:214px;width:1px;height:17px;background:#bebebe"></div><div class="a" style="left:605px;top:232px;width:1px;height:377px;background:#d4d4d4"></div><div class="a" style="left:605px;top:214px;width:1px;height:17px;background:#bebebe"></div><div class="a" style="left:677px;top:232px;width:1px;height:377px;background:#d4d4d4"></div><div class="a" style="left:677px;top:214px;width:1px;height:17px;background:#bebebe"></div><div class="a" style="left:749px;top:232px;width:1px;height:377px;background:#d4d4d4"></div><div class="a" style="left:749px;top:214px;width:1px;height:17px;background:#bebebe"></div><div class="a" style="left:821px;top:232px;width:1px;height:377px;background:#d4d4d4"></div><div class="a" style="left:821px;top:214px;width:1px;height:17px;background:#bebebe"></div><div class="a" style="left:893px;top:232px;width:1px;height:377px;background:#d4d4d4"></div><div class="a" style="left:893px;top:214px;width:1px;height:17px;background:#bebebe"></div><div class="a" style="left:965px;top:232px;width:1px;height:377px;background:#d4d4d4"></div><div class="a" style="left:965px;top:214px;width:1px;height:17px;background:#bebebe"></div><div class="a" style="left:1037px;top:232px;width:1px;height:377px;background:#d4d4d4"></div><div class="a" style="left:1037px;top:214px;width:1px;height:17px;background:#bebebe"></div><div class="a" style="left:1109px;top:232px;width:1px;height:377px;background:#d4d4d4"></div><div class="a" style="left:1109px;top:214px;width:1px;height:17px;background:#bebebe"></div><div class="a" style="left:1181px;top:232px;width:1px;height:377px;background:#d4d4d4"></div><div class="a" style="left:1181px;top:214px;width:1px;height:17px;background:#bebebe"></div><div class="a" style="left:1253px;top:232px;width:1px;height:377px;background:#d4d4d4"></div><div class="a" style="left:1253px;top:214px;width:1px;height:17px;background:#bebebe"></div><div class="a" style="left:1325px;top:232px;width:1px;height:377px;background:#d4d4d4"></div><div class="a" style="left:1325px;top:214px;width:1px;height:17px;background:#bebebe"></div><div class="a" style="left:1397px;top:232px;width:1px;height:377px;background:#d4d4d4"></div><div class="a" style="left:1397px;top:214px;width:1px;height:17px;background:#bebebe"></div><div class="a" style="left:29px;top:249px;width:1369px;height:1px;background:#d4d4d4"></div><div class="a" style="left:1px;top:249px;width:28px;height:1px;background:#bebebe"></div><div class="a" style="left:29px;top:267px;width:1369px;height:1px;background:#d4d4d4"></div><div class="a" style="left:1px;top:267px;width:28px;height:1px;background:#bebebe"></div><div class="a" style="left:29px;top:285px;width:1369px;height:1px;background:#d4d4d4"></div><div class="a" style="left:1px;top:285px;width:28px;height:1px;background:#bebebe"></div><div class="a" style="left:29px;top:303px;width:1369px;height:1px;background:#d4d4d4"></div><div class="a" style="left:1px;top:303px;width:28px;height:1px;background:#bebebe"></div><div class="a" style="left:29px;top:321px;width:1369px;height:1px;background:#d4d4d4"></div><div class="a" style="left:1px;top:321px;width:28px;height:1px;background:#bebebe"></div><div class="a" style="left:29px;top:339px;width:1369px;height:1px;background:#d4d4d4"></div><div class="a" style="left:1px;top:339px;width:28px;height:1px;background:#bebebe"></div><div class="a" style="left:29px;top:357px;width:1369px;height:1px;background:#d4d4d4"></div><div class="a" style="left:1px;top:357px;width:28px;height:1px;background:#bebebe"></div><div class="a" style="left:29px;top:375px;width:1369px;height:1px;background:#d4d4d4"></div><div class="a" style="left:1px;top:375px;width:28px;height:1px;background:#bebebe"></div><div class="a" style="left:29px;top:393px;width:1369px;height:1px;background:#d4d4d4"></div><div class="a" style="left:1px;top:393px;width:28px;height:1px;background:#bebebe"></div><div class="a" style="left:29px;top:411px;width:1369px;height:1px;background:#d4d4d4"></div><div class="a" style="left:1px;top:411px;width:28px;height:1px;background:#bebebe"></div><div class="a" style="left:29px;top:429px;width:1369px;height:1px;background:#d4d4d4"></div><div class="a" style="left:1px;top:429px;width:28px;height:1px;background:#bebebe"></div><div class="a" style="left:29px;top:447px;width:1369px;height:1px;background:#d4d4d4"></div><div class="a" style="left:1px;top:447px;width:28px;height:1px;background:#bebebe"></div><div class="a" style="left:29px;top:465px;width:1369px;height:1px;background:#d4d4d4"></div><div class="a" style="left:1px;top:465px;width:28px;height:1px;background:#bebebe"></div><div class="a" style="left:29px;top:483px;width:1369px;height:1px;background:#d4d4d4"></div><div class="a" style="left:1px;top:483px;width:28px;height:1px;background:#bebebe"></div><div class="a" style="left:29px;top:501px;width:1369px;height:1px;background:#d4d4d4"></div><div class="a" style="left:1px;top:501px;width:28px;height:1px;background:#bebebe"></div><div class="a" style="left:29px;top:519px;width:1369px;height:1px;background:#d4d4d4"></div><div class="a" style="left:1px;top:519px;width:28px;height:1px;background:#bebebe"></div><div class="a" style="left:29px;top:537px;width:1369px;height:1px;background:#d4d4d4"></div><div class="a" style="left:1px;top:537px;width:28px;height:1px;background:#bebebe"></div><div class="a" style="left:29px;top:555px;width:1369px;height:1px;background:#d4d4d4"></div><div class="a" style="left:1px;top:555px;width:28px;height:1px;background:#bebebe"></div><div class="a" style="left:29px;top:573px;width:1369px;height:1px;background:#d4d4d4"></div><div class="a" style="left:1px;top:573px;width:28px;height:1px;background:#bebebe"></div><div class="a" style="left:29px;top:591px;width:1369px;height:1px;background:#d4d4d4"></div><div class="a" style="left:1px;top:591px;width:28px;height:1px;background:#bebebe"></div><div class="a" style="left:29px;top:609px;width:1369px;height:1px;background:#d4d4d4"></div><div class="a" style="left:1px;top:609px;width:28px;height:1px;background:#bebebe"></div>
<div class="a" style="left:1px;top:231px;width:1397px;height:1px;background:#ababab"></div>
<div class="a" style="left:245px;top:230px;width:577px;height:2px;background:#217346"></div>
<div class="a" style="left:29px;top:214px;width:1px;height:395px;background:#ababab"></div>
<div class="a" style="left:28px;top:267px;width:2px;height:73px;background:#217346"></div>
<svg class="a" style="left:16px;top:218px" width="11" height="11" viewBox="0 0 11 11"><polygon points="10,0 10,10 0,10" fill="#b4b4b4"/></svg>
<div class="a" style="left:29.0px;width:72px;top:217px;text-align:center;font-size:13px;color:#000;">A</div>
<div class="a" style="left:101.0px;width:72px;top:217px;text-align:center;font-size:13px;color:#000;">B</div>
<div class="a" style="left:173.0px;width:72px;top:217px;text-align:center;font-size:13px;color:#000;">C</div>
<div class="a" style="left:245.0px;width:72px;top:217px;text-align:center;font-size:13px;color:#217346;">D</div>
<div class="a" style="left:317.0px;width:72px;top:217px;text-align:center;font-size:13px;color:#217346;">E</div>
<div class="a" style="left:389.0px;width:72px;top:217px;text-align:center;font-size:13px;color:#217346;">F</div>
<div class="a" style="left:461.0px;width:72px;top:217px;text-align:center;font-size:13px;color:#217346;">G</div>
<div class="a" style="left:533.0px;width:72px;top:217px;text-align:center;font-size:13px;color:#217346;">H</div>
<div class="a" style="left:605.0px;width:72px;top:217px;text-align:center;font-size:13px;color:#217346;font-family:'Liberation Mono',monospace;">I</div>
<div class="a" style="left:677.0px;width:72px;top:217px;text-align:center;font-size:13px;color:#217346;">J</div>
<div class="a" style="left:749.0px;width:72px;top:217px;text-align:center;font-size:13px;color:#217346;">K</div>
<div class="a" style="left:821.0px;width:72px;top:217px;text-align:center;font-size:13px;color:#000;">L</div>
<div class="a" style="left:893.0px;width:72px;top:217px;text-align:center;font-size:13px;color:#000;">M</div>
<div class="a" style="left:965.0px;width:72px;top:217px;text-align:center;font-size:13px;color:#000;">N</div>
<div class="a" style="left:1037.0px;width:72px;top:217px;text-align:center;font-size:13px;color:#000;">O</div>
<div class="a" style="left:1109.0px;width:72px;top:217px;text-align:center;font-size:13px;color:#000;">P</div>
<div class="a" style="left:1181.0px;width:72px;top:217px;text-align:center;font-size:13px;color:#000;">Q</div>
<div class="a" style="left:1253.0px;width:72px;top:217px;text-align:center;font-size:13px;color:#000;">R</div>
<div class="a" style="left:1325.0px;width:72px;top:217px;text-align:center;font-size:13px;color:#000;">S</div>
<div class="a" style="left:0px;width:28px;top:235px;text-align:center;font-size:13px;color:#000">1</div>
<div class="a" style="left:0px;width:28px;top:253px;text-align:center;font-size:13px;color:#000">2</div>
<div class="a" style="left:0px;width:28px;top:271px;text-align:center;font-size:13px;color:#217346">3</div>
<div class="a" style="left:0px;width:28px;top:289px;text-align:center;font-size:13px;color:#217346">4</div>
<div class="a" style="left:0px;width:28px;top:307px;text-align:center;font-size:13px;color:#217346">5</div>
<div class="a" style="left:0px;width:28px;top:325px;text-align:center;font-size:13px;color:#217346">6</div>
<div class="a" style="left:0px;width:28px;top:343px;text-align:center;font-size:13px;color:#000">7</div>
<div class="a" style="left:0px;width:28px;top:361px;text-align:center;font-size:13px;color:#000">8</div>
<div class="a" style="left:0px;width:28px;top:379px;text-align:center;font-size:13px;color:#000">9</div>
<div class="a" style="left:0px;width:28px;top:397px;text-align:center;font-size:13px;color:#000">10</div>
<div class="a" style="left:0px;width:28px;top:415px;text-align:center;font-size:13px;color:#000">11</div>
<div class="a" style="left:0px;width:28px;top:433px;text-align:center;font-size:13px;color:#000">12</div>
<div class="a" style="left:0px;width:28px;top:451px;text-align:center;font-size:13px;color:#000">13</div>
<div class="a" style="left:0px;width:28px;top:469px;text-align:center;font-size:13px;color:#000">14</div>
<div class="a" style="left:0px;width:28px;top:487px;text-align:center;font-size:13px;color:#000">15</div>
<div class="a" style="left:0px;width:28px;top:505px;text-align:center;font-size:13px;color:#000">16</div>
<div class="a" style="left:0px;width:28px;top:523px;text-align:center;font-size:13px;color:#000">17</div>
<div class="a" style="left:0px;width:28px;top:541px;text-align:center;font-size:13px;color:#000">18</div>
<div class="a" style="left:0px;width:28px;top:559px;text-align:center;font-size:13px;color:#000">19</div>
<div class="a" style="left:0px;width:28px;top:577px;text-align:center;font-size:13px;color:#000">20</div>
<div class="a" style="left:0px;width:28px;top:595px;text-align:center;font-size:13px;color:#000">21</div>
<div class="a" style="left:30px;top:250px;width:216px;height:17px;background:#d0cece"></div>
<div class="a" style="left:246px;top:250px;width:576px;height:17px;background:#d0cece"></div>
<div class="a" style="left:30px;top:268px;width:216px;height:54px;background:#f8cbad"></div>
<div class="a" style="left:246px;top:268px;width:576px;height:72px;background:#aeb9a7"></div>
<div class="a" style="left:246px;top:268px;width:71px;height:17px;background:#e2edda"></div>
<div class="a" style="left:29px;top:249px;width:793px;height:1px;background:#000"></div>
<div class="a" style="left:29px;top:267px;width:793px;height:1px;background:#000"></div>
<div class="a" style="left:101px;top:249px;width:1px;height:72px;background:repeating-linear-gradient(180deg,#000 0 1px,transparent 1px 2px)"></div>
<div class="a" style="left:173px;top:249px;width:1px;height:72px;background:repeating-linear-gradient(180deg,#000 0 1px,transparent 1px 2px)"></div>
<div class="a" style="left:29px;top:285px;width:216px;height:1px;background:repeating-linear-gradient(90deg,#000 0 1px,transparent 1px 2px)"></div>
<div class="a" style="left:29px;top:303px;width:216px;height:1px;background:repeating-linear-gradient(90deg,#000 0 1px,transparent 1px 2px)"></div>
<div class="a" style="left:245px;top:249px;width:1px;height:18px;background:#000"></div>
<div class="a" style="left:389px;top:249px;width:1px;height:18px;background:#000"></div>
<div class="a" style="left:605px;top:249px;width:1px;height:18px;background:#000"></div>
<div class="a" style="left:821px;top:249px;width:1px;height:18px;background:#000"></div>
<div class="a" style="left:317px;top:267px;width:1px;height:72px;background:#000"></div>
<div class="a" style="left:389px;top:267px;width:1px;height:72px;background:#000"></div>
<div class="a" style="left:605px;top:267px;width:1px;height:72px;background:#000"></div>
<div class="a" style="left:461px;top:267px;width:1px;height:72px;background:repeating-linear-gradient(180deg,#000 0 1px,transparent 1px 2px)"></div>
<div class="a" style="left:533px;top:267px;width:1px;height:72px;background:repeating-linear-gradient(180deg,#000 0 1px,transparent 1px 2px)"></div>
<div class="a" style="left:677px;top:267px;width:1px;height:72px;background:repeating-linear-gradient(180deg,#000 0 1px,transparent 1px 2px)"></div>
<div class="a" style="left:749px;top:267px;width:1px;height:72px;background:repeating-linear-gradient(180deg,#000 0 1px,transparent 1px 2px)"></div>
<div class="a" style="left:245px;top:285px;width:576px;height:1px;background:repeating-linear-gradient(90deg,#000 0 1px,transparent 1px 2px)"></div>
<div class="a" style="left:245px;top:303px;width:576px;height:1px;background:repeating-linear-gradient(90deg,#000 0 1px,transparent 1px 2px)"></div>
<div class="a" style="left:245px;top:321px;width:576px;height:1px;background:#000"></div>
<div class="a" style="left:29px;top:321px;width:216px;height:1px;background:#000"></div>
<div class="a" style="left:246px;top:268px;width:575px;height:71px;border:1px solid #fff"></div>
<div class="a" style="left:244px;top:266px;width:579px;height:2px;background:#1d6b3d"></div>
<div class="a" style="left:244px;top:339px;width:579px;height:2px;background:#1d6b3d"></div>
<div class="a" style="left:244px;top:266px;width:2px;height:75px;background:#1d6b3d"></div>
<div class="a" style="left:821px;top:266px;width:2px;height:75px;background:#1d6b3d"></div>
<div class="a" style="left:819px;top:337px;width:6px;height:6px;background:#1d6b3d;border:1px solid #fff"></div>
<div class="a" style="left:32px;top:235px;font-size:14px;color:#000">WDgeev</div>
<div class="a" style="left:32px;top:253px;font-size:14px;color:#000">A</div>
<div class="a" style="left:248px;top:253px;font-size:14px;color:#000">Eigenvalues</div>
<div class="a" style="left:392px;top:253px;font-size:14px;color:#000">Eigenvectors</div>
<div class="a" style="left:608px;top:253px;font-size:14px;color:#000">Eigenvectors</div>
<div class="a" style="left:29px;width:69px;top:271px;text-align:right;font-size:14px;color:#000">0.2</div>
<div class="a" style="left:101px;width:69px;top:271px;text-align:right;font-size:14px;color:#000">&minus;0.11</div>
<div class="a" style="left:173px;width:69px;top:271px;text-align:right;font-size:14px;color:#000">&minus;0.93</div>
<div class="a" style="left:29px;width:69px;top:289px;text-align:right;font-size:14px;color:#000">&minus;0.32</div>
<div class="a" style="left:101px;width:69px;top:289px;text-align:right;font-size:14px;color:#000">0.81</div>
<div class="a" style="left:173px;width:69px;top:289px;text-align:right;font-size:14px;color:#000">0.37</div>
<div class="a" style="left:29px;width:69px;top:307px;text-align:right;font-size:14px;color:#000">&minus;0.8</div>
<div class="a" style="left:101px;width:69px;top:307px;text-align:right;font-size:14px;color:#000">&minus;0.92</div>
<div class="a" style="left:173px;width:69px;top:307px;text-align:right;font-size:14px;color:#000">&minus;0.29</div>
<div class="a" style="left:317px;width:69px;top:271px;text-align:right;font-size:14px;color:#000">0</div>
<div class="a" style="left:389px;width:69px;top:271px;text-align:right;font-size:14px;color:#000">&minus;0.61056</div>
<div class="a" style="left:461px;width:69px;top:271px;text-align:right;font-size:14px;color:#000">0.062024</div>
<div class="a" style="left:533px;width:69px;top:271px;text-align:right;font-size:14px;color:#000">&minus;0.53219</div>
<div class="a" style="left:605px;width:69px;top:271px;text-align:right;font-size:14px;color:#000">&minus;0.64087</div>
<div class="a" style="left:677px;width:69px;top:271px;text-align:right;font-size:14px;color:#000">&minus;0.22876</div>
<div class="a" style="left:749px;width:69px;top:271px;text-align:right;font-size:14px;color:#000">&minus;0.50418</div>
<div class="a" style="left:245px;width:69px;top:289px;text-align:right;font-size:14px;color:#000">0.812065</div>
<div class="a" style="left:317px;width:69px;top:289px;text-align:right;font-size:14px;color:#000">0.489158</div>
<div class="a" style="left:389px;width:69px;top:289px;text-align:right;font-size:14px;color:#000">&minus;0.40459</div>
<div class="a" style="left:461px;width:69px;top:289px;text-align:right;font-size:14px;color:#000">0.71745</div>
<div class="a" style="left:533px;width:69px;top:289px;text-align:right;font-size:14px;color:#000">0</div>
<div class="a" style="left:605px;width:69px;top:289px;text-align:right;font-size:14px;color:#000">0.045763</div>
<div class="a" style="left:677px;width:69px;top:289px;text-align:right;font-size:14px;color:#000">0.671833</div>
<div class="a" style="left:749px;width:69px;top:289px;text-align:right;font-size:14px;color:#000">0</div>
<div class="a" style="left:245px;width:69px;top:307px;text-align:right;font-size:14px;color:#000">0.812065</div>
<div class="a" style="left:317px;width:69px;top:307px;text-align:right;font-size:14px;color:#000">&minus;0.48916</div>
<div class="a" style="left:389px;width:69px;top:307px;text-align:right;font-size:14px;color:#000">&minus;0.68083</div>
<div class="a" style="left:461px;width:69px;top:307px;text-align:right;font-size:14px;color:#000">&minus;0.00903</div>
<div class="a" style="left:533px;width:69px;top:307px;text-align:right;font-size:14px;color:#000">0.445095</div>
<div class="a" style="left:605px;width:69px;top:307px;text-align:right;font-size:14px;color:#000">&minus;0.76628</div>
<div class="a" style="left:677px;width:69px;top:307px;text-align:right;font-size:14px;color:#000">&minus;0.1941</div>
<div class="a" style="left:749px;width:69px;top:307px;text-align:right;font-size:14px;color:#000">0.452144</div>
<div class="a" style="left:245px;width:69px;top:325px;text-align:right;font-size:14px;color:#000">0</div>
<div class="a" style="left:317px;width:69px;top:325px;text-align:right;font-size:14px;color:#000">0</div>
<div class="a" style="left:389px;width:69px;top:325px;text-align:right;font-size:14px;color:#000">0</div>
<div class="a" style="left:461px;width:69px;top:325px;text-align:right;font-size:14px;color:#000">0</div>
<div class="a" style="left:533px;width:69px;top:325px;text-align:right;font-size:14px;color:#000">0</div>
<div class="a" style="left:605px;width:69px;top:325px;text-align:right;font-size:14px;color:#000">0</div>
<div class="a" style="left:677px;width:69px;top:325px;text-align:right;font-size:14px;color:#000">0</div>
<div class="a" style="left:749px;width:69px;top:325px;text-align:right;font-size:14px;color:#000">0</div>
<div class="a" style="left:248px;top:271px;font-size:14px;color:#000">A3:C5)</div>
<div class="a" style="left:847px;top:214px;width:483px;height:361px;background:#f0f0f0;border:1px solid #6f6f6f;box-shadow:0 5px 18px 2px rgba(0,0,0,0.22)"></div>
<div class="a" style="left:848px;top:215px;width:481px;height:30px;background:#fff"></div>
<div class="t" style="left:857.00px;top:225.00px;font-size:11.50px;color:#000;font-weight:normal;transform:scaleX(0.950);">関数の引数</div>
<div class="t" style="left:1258.00px;top:222.00px;font-size:14.50px;color:#000;font-weight:normal;transform:scaleX(0.857);">?</div>
<svg class="a" style="left:1300px;top:223.5px" width="12" height="12" viewBox="0 0 12 12"><path d="M1 0.5 L11 10.5 M11 0.5 L1 10.5" stroke="#000" stroke-width="1.1"/></svg>
<div class="a" style="left:854px;top:261px;width:468px;height:124px;border:1px solid #dcdcdc"></div>
<div class="a" style="left:858px;top:254px;width:52px;height:14px;background:#f0f0f0"></div>
<div class="t" style="left:860.00px;top:255.00px;font-size:12.00px;color:#000;font-weight:normal;transform:scaleX(1.052);">WDgeev</div>
<div class="a" style="left:908px;top:276px;width:177px;height:23px;background:#fff;border:1px solid #a8a8a8"></div>
<div class="a" style="left:1084px;top:276px;width:22px;height:23px;background:#e3e3e3;border:2px solid #a8a8a8"></div>
<div class="a" style="left:1087px;top:279px;width:15px;height:14px;background:#fff"></div>
<svg class="a" style="left:1090px;top:280.5px" width="9" height="12" viewBox="0 0 9 12"><polygon points="4.5,0.3 8.7,4.6 8.7,5.4 5.9,5.4 5.9,8.6 3.1,8.6 3.1,5.4 0.3,5.4 0.3,4.6" fill="#000"/><rect x="0.3" y="9.6" width="8.4" height="1.3" fill="#000"/></svg>
<div class="t" style="left:1115.00px;top:281.20px;font-size:13.50px;color:#000;font-weight:normal;transform:scaleX(1.235);">=</div>
<div class="a" style="left:908px;top:303px;width:177px;height:23px;background:#fff;border:1px solid #a8a8a8"></div>
<div class="a" style="left:1084px;top:303px;width:22px;height:23px;background:#e3e3e3;border:2px solid #a8a8a8"></div>
<div class="a" style="left:1087px;top:306px;width:15px;height:14px;background:#fff"></div>
<svg class="a" style="left:1090px;top:307.5px" width="9" height="12" viewBox="0 0 9 12"><polygon points="4.5,0.3 8.7,4.6 8.7,5.4 5.9,5.4 5.9,8.6 3.1,8.6 3.1,5.4 0.3,5.4 0.3,4.6" fill="#000"/><rect x="0.3" y="9.6" width="8.4" height="1.3" fill="#000"/></svg>
<div class="t" style="left:1115.00px;top:308.20px;font-size:13.50px;color:#000;font-weight:normal;transform:scaleX(1.235);">=</div>
<div class="a" style="left:908px;top:330px;width:177px;height:23px;background:#fff;border:1px solid #a8a8a8"></div>
<div class="a" style="left:1084px;top:330px;width:22px;height:23px;background:#e3e3e3;border:2px solid #a8a8a8"></div>
<div class="a" style="left:1087px;top:333px;width:15px;height:14px;background:#fff"></div>
<svg class="a" style="left:1090px;top:334.5px" width="9" height="12" viewBox="0 0 9 12"><polygon points="4.5,0.3 8.7,4.6 8.7,5.4 5.9,5.4 5.9,8.6 3.1,8.6 3.1,5.4 0.3,5.4 0.3,4.6" fill="#000"/><rect x="0.3" y="9.6" width="8.4" height="1.3" fill="#000"/></svg>
<div class="t" style="left:1115.00px;top:335.20px;font-size:13.50px;color:#000;font-weight:normal;transform:scaleX(1.235);">=</div>
<div class="a" style="left:908px;top:357px;width:177px;height:23px;background:#fff;border:1px solid #a8a8a8"></div>
<div class="a" style="left:1084px;top:357px;width:22px;height:23px;background:#e3e3e3;border:2px solid #a8a8a8"></div>
<div class="a" style="left:1087px;top:360px;width:15px;height:14px;background:#fff"></div>
<svg class="a" style="left:1090px;top:361.5px" width="9" height="12" viewBox="0 0 9 12"><polygon points="4.5,0.3 8.7,4.6 8.7,5.4 5.9,5.4 5.9,8.6 3.1,8.6 3.1,5.4 0.3,5.4 0.3,4.6" fill="#000"/><rect x="0.3" y="9.6" width="8.4" height="1.3" fill="#000"/></svg>
<div class="t" style="left:1115.00px;top:362.20px;font-size:13.50px;color:#000;font-weight:normal;transform:scaleX(1.235);">=</div>
<div class="t" style="left:868.90px;top:281.80px;font-size:12.50px;color:#000;font-weight:normal;transform:scaleX(0.968);">JobVl</div>
<div class="t" style="left:866.50px;top:308.80px;font-size:12.50px;color:#000;font-weight:normal;transform:scaleX(1.000);">JobVr</div>
<div class="t" style="left:889.70px;top:334.80px;font-size:13.50px;color:#000;font-weight:normal;transform:scaleX(1.004);">N</div>
<div class="t" style="left:891.00px;top:361.80px;font-size:13.50px;color:#000;font-weight:normal;transform:scaleX(0.889);">A</div>
<div class="a" style="left:912px;top:279px;width:18px;height:15px;background:#c8c8c8"></div>
<div class="t" style="left:912.00px;top:280.00px;font-size:14.50px;color:#000;font-weight:normal;transform:scaleX(0.889);">&quot;V&quot;</div>
<div class="a" style="left:930px;top:279px;width:1px;height:15px;background:#000"></div>
<div class="t" style="left:912.00px;top:307.00px;font-size:14.50px;color:#000;font-weight:normal;transform:scaleX(0.889);">&quot;V&quot;</div>
<div class="t" style="left:911.70px;top:334.00px;font-size:13.00px;color:#000;font-weight:normal;transform:scaleX(1.083);">3</div>
<div class="t" style="left:913.00px;top:361.00px;font-size:14.00px;color:#000;font-weight:normal;transform:scaleX(0.895);">A3:C5</div>
<div class="t" style="left:1133.60px;top:280.00px;font-size:14.00px;color:#000;font-weight:normal;transform:scaleX(0.944);">&quot;V&quot;</div>
<div class="t" style="left:1133.60px;top:307.00px;font-size:14.00px;color:#000;font-weight:normal;transform:scaleX(0.944);">&quot;V&quot;</div>
<div class="t" style="left:1133.30px;top:336.10px;font-size:12.50px;color:#000;font-weight:normal;transform:scaleX(1.068);">3</div>
<div class="t" style="left:1134.60px;top:361.00px;font-size:13.00px;color:#000;font-weight:normal;transform:scaleX(1.051);">{0.2,-0.11,-0.93;-0.32,0.81,0...</div>
<div class="t" style="left:1115.00px;top:392.00px;font-size:13.50px;color:#000;font-weight:normal;transform:scaleX(1.235);">=</div>
<div class="t" style="left:1134.60px;top:392.00px;font-size:13.00px;color:#000;font-weight:normal;transform:scaleX(1.010);">{-0.904130023851345,0,-0.6...</div>
<div class="t" style="left:853.00px;top:411.70px;font-size:12.00px;color:#000;font-weight:normal;transform:scaleX(0.955);">固有値･固有ベクトル (一般行列)</div>
<div class="t" style="left:1021.60px;top:440.00px;font-size:13.00px;color:#000;font-weight:normal;transform:scaleX(0.868);">JobVl&nbsp;&nbsp;：左固有ベクトル計算指定 (N または V)</div>
<div class="a" style="left:854px;top:497px;width:468px;height:1px;background:#dadada"></div>
<div class="t" style="left:854.00px;top:514.00px;font-size:12.00px;color:#000;font-weight:normal;transform:scaleX(1.035);">数式の結果 =&nbsp;&nbsp;&nbsp;-0.904130024</div>
<div class="t" style="left:854.00px;top:547.00px;font-size:12.00px;color:#0066cc;font-weight:normal;transform:scaleX(0.881);text-decoration:underline">この関数のヘルプ(H)</div>
<div class="a" style="left:1164px;top:540px;width:74px;height:25px;background:#e1e1e1;border:2px solid #0078d7"></div>
<div class="t" style="left:1191.40px;top:547.30px;font-size:12.00px;color:#000;font-weight:normal;transform:scaleX(1.051);">OK</div>
<div class="a" style="left:1248px;top:540px;width:74px;height:25px;background:#e1e1e1;border:1px solid #adadad"></div>
<div class="t" style="left:1259.80px;top:546.00px;font-size:13.50px;color:#000;font-weight:normal;transform:scaleX(0.671);">キャンセル</div>
<div class="a" style="left:0px;top:0px;width:1398px;height:1px;background:#8a8a8a"></div>
<div class="a" style="left:0px;top:0px;width:1px;height:609px;background:#8a8a8a"></div>
</body></html>
